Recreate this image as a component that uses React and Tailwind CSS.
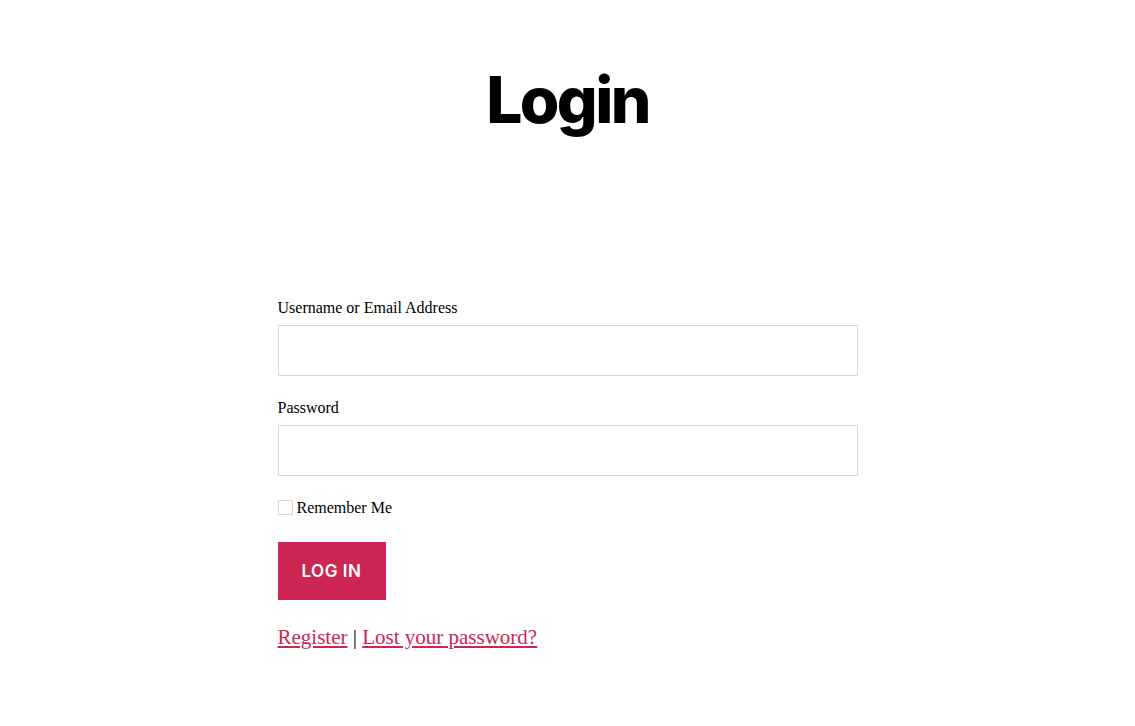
import React from "react";

export default function App() {
  return (
    <div className="min-h-[726px] bg-white font-['Liberation_Serif',serif] text-black">
      {/* Page title */}
      <header className="pt-[68px] text-center">
        <h1 className="font-['Inter',sans-serif] text-[64px] leading-none font-extrabold tracking-[-0.04em]">
          Login
        </h1>
      </header>

      {/* Login form */}
      <form className="mx-auto mt-[163px] w-[580px]" onSubmit={(e) => e.preventDefault()}>
        <p className="mb-[19px]">
          <label htmlFor="user_login" className="block text-base leading-6 mb-[5px] pt-px">
            Username or Email Address
          </label>
          <input
            id="user_login"
            type="text"
            className="block w-full h-[51px] border border-[#dcd7ca] bg-white px-4 outline-none"
          />
        </p>
        <p className="mb-[19px]">
          <label htmlFor="user_pass" className="block text-base leading-6 mb-[5px] pt-px">
            Password
          </label>
          <input
            id="user_pass"
            type="password"
            className="block w-full h-[51px] border border-[#dcd7ca] bg-white px-4 outline-none"
          />
        </p>
        <p className="flex items-center gap-[4px] text-base leading-6 mb-[22px]">
          <input
            type="checkbox"
            className="appearance-none w-[15px] h-[15px] border border-[#dcd7ca] bg-white m-0"
          />
          <label className="pt-px">Remember Me</label>
        </p>
        <button
          type="submit"
          className="block w-[108px] h-[58px] pt-px bg-[#cd2653] text-white font-['Inter',sans-serif] text-[17px] font-semibold uppercase tracking-[0.0333em]"
        >
          Log In
        </button>
        <p className="mt-[23px] text-[21px] leading-7">
          <a href="#" className="text-[#cd2653] underline">Register</a>
          {" | "}
          <a href="#" className="text-[#cd2653] underline">Lost your password?</a>
        </p>
      </form>
    </div>
  );
}
